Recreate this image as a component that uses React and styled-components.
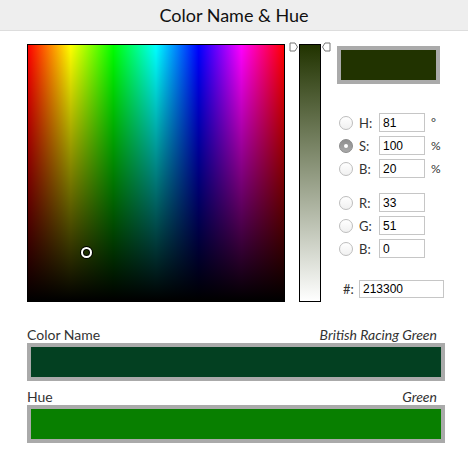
import styled, { createGlobalStyle } from "styled-components";

const GlobalStyle = createGlobalStyle`
  body {
    margin: 0;
    background: #fff;
    color: #222;
    font-family: "Lato", "Open Sans", sans-serif;
  }
`;

const HSB_ROWS = [
  { key: "H", value: "81", unit: "°" },
  { key: "S", value: "100", unit: "%", checked: true },
  { key: "B", value: "20", unit: "%" },
];

const RGB_ROWS = [
  { key: "R", value: "33" },
  { key: "G", value: "51" },
  { key: "B", value: "0" },
];

function Arrow({ flip }) {
  return (
    <svg width="9" height="10" viewBox="0 0 9 10">
      <path
        d={flip ? "M8 1 L8 9 L3 9 L0.5 5 L3 1 Z" : "M1 1 L1 9 L6 9 L8.5 5 L6 1 Z"}
        fill="#fff"
        stroke="#777"
        strokeWidth="1"
      />
    </svg>
  );
}

function App() {
  return (
    <>
      <GlobalStyle />
      <Header>Color Name &amp; Hue</Header>
      <Main>
        <Field>
          <Marker />
        </Field>
        <BarWrap>
          <LeftArrow><Arrow /></LeftArrow>
          <Bar />
          <RightArrow><Arrow flip /></RightArrow>
        </BarWrap>
        <Side>
          <Swatch $color="#213300" />
          <Group $top={29}>
            {HSB_ROWS.map((r) => (
              <Row key={r.key}>
                <Radio $checked={r.checked} />
                <Label>{r.key}:</Label>
                <Input defaultValue={r.value} />
                <Unit>{r.unit}</Unit>
              </Row>
            ))}
          </Group>
          <Group $top={15}>
            {RGB_ROWS.map((r) => (
              <Row key={r.key}>
                <Radio />
                <Label>{r.key}:</Label>
                <Input defaultValue={r.value} />
              </Row>
            ))}
          </Group>
          <HexRow>
            <HexLabel>#:</HexLabel>
            <HexInput defaultValue="213300" />
          </HexRow>
        </Side>
      </Main>
      <Section>
        <LabelRow>
          <span>Color Name</span>
          <Value>British Racing Green</Value>
        </LabelRow>
        <ColorBar $color="#034021" />
        <LabelRow $top={8}>
          <span>Hue</span>
          <Value>Green</Value>
        </LabelRow>
        <ColorBar $color="#087f00" />
      </Section>
    </>
  );
}

export default App;

const Header = styled.div`
  height: 30px;
  background: #eeeeee;
  border-bottom: 1px solid #dddddd;
  display: flex;
  align-items: center;
  justify-content: center;
  font-size: 18px;
  color: #111;
`;

const Main = styled.div`
  display: flex;
  align-items: flex-start;
  padding: 13px 0 0 27px;
`;

const Field = styled.div`
  position: relative;
  width: 256px;
  height: 256px;
  border: 1px solid #000;
  background: linear-gradient(to bottom, rgba(0, 0, 0, 0), #000),
    linear-gradient(to right, #f00, #ff0, #0f0, #0ff, #00f, #f0f, #f00);
`;

const Marker = styled.div`
  position: absolute;
  left: 53px;
  top: 202px;
  width: 7px;
  height: 7px;
  border: 2px solid #fff;
  border-radius: 50%;
  box-shadow: 0 0 0 1px #000, inset 0 0 0 1px #000;
`;

const BarWrap = styled.div`
  position: relative;
  margin-left: 14px;
`;

const Bar = styled.div`
  width: 20px;
  height: 256px;
  border: 1px solid #000;
  background: linear-gradient(to bottom, #213300, #ffffff);
`;

const LeftArrow = styled.div`
  position: absolute;
  left: -10px;
  top: -2px;
  line-height: 0;
`;

const RightArrow = styled.div`
  position: absolute;
  right: -10px;
  top: -2px;
  line-height: 0;
`;

const Side = styled.div`
  margin-left: 16px;
  display: flex;
  flex-direction: column;
`;

const Swatch = styled.div`
  margin-top: 2px;
  width: 95px;
  height: 30px;
  border: 4px solid #aaaaaa;
  background: ${(p) => p.$color};
`;

const Group = styled.div`
  margin-top: ${(p) => p.$top}px;
  display: flex;
  flex-direction: column;
  gap: 4px;
`;

const Row = styled.div`
  display: flex;
  align-items: center;
  height: 19px;
  font-size: 13px;
`;

const Radio = styled.span`
  position: relative;
  box-sizing: border-box;
  margin-left: 2px;
  width: 14px;
  height: 14px;
  border-radius: 50%;
  border: 1px solid ${(p) => (p.$checked ? "#8a8a8a" : "#bdbdbd")};
  background: ${(p) =>
    p.$checked
      ? "linear-gradient(#8f8f8f, #a9a9a9)"
      : "linear-gradient(#ffffff, #f0f0f0)"};
  &::after {
    content: "";
    display: ${(p) => (p.$checked ? "block" : "none")};
    position: absolute;
    left: 4px;
    top: 4px;
    width: 4px;
    height: 4px;
    border-radius: 50%;
    background: #fff;
  }
`;

const Label = styled.span`
  margin-left: 6px;
  width: 20px;
  color: #333;
`;

const Input = styled.input`
  box-sizing: border-box;
  width: 46px;
  height: 19px;
  border: 1px solid #c6c6c6;
  padding: 0 3px;
  font-family: "Liberation Sans", Arial, sans-serif;
  font-size: 12px;
  color: #000;
  outline: none;
`;

const Unit = styled.span`
  margin-left: 6px;
  font-size: 12px;
  color: #333;
`;

const HexRow = styled.div`
  margin-top: 22px;
  display: flex;
  align-items: center;
  padding-left: 6px;
  font-size: 13px;
`;

const HexLabel = styled.span`
  width: 16px;
  color: #333;
`;

const HexInput = styled(Input)`
  width: 85px;
  height: 18px;
`;

const Section = styled.div`
  margin: 25px 0 0 27px;
  width: 418px;
`;

const LabelRow = styled.div`
  display: flex;
  justify-content: space-between;
  padding-right: 8px;
  margin-top: ${(p) => p.$top || 0}px;
  font-size: 14px;
  line-height: 16px;
  color: #333;
`;

const Value = styled.span`
  font-style: italic;
`;

const ColorBar = styled.div`
  height: 30px;
  border: 4px solid #aaaaaa;
  background: ${(p) => p.$color};
`;
